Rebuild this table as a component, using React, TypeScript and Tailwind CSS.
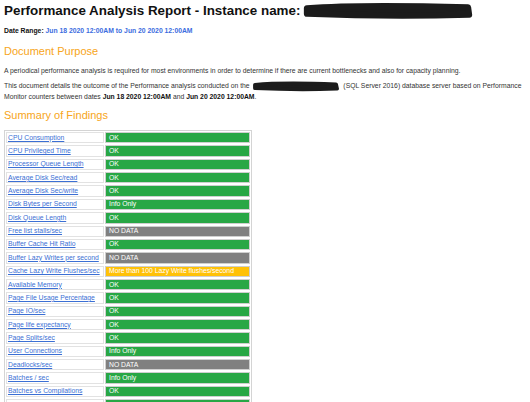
import React from "react";

type Status = "ok" | "info" | "nodata" | "warn";

const findings: { name: string; status: Status; text: string }[] = [
  { name: "CPU Consumption", status: "ok", text: "OK" },
  { name: "CPU Privileged Time", status: "ok", text: "OK" },
  { name: "Processor Queue Length", status: "ok", text: "OK" },
  { name: "Average Disk Sec/read", status: "ok", text: "OK" },
  { name: "Average Disk Sec/write", status: "ok", text: "OK" },
  { name: "Disk Bytes per Second", status: "info", text: "Info Only" },
  { name: "Disk Queue Length", status: "ok", text: "OK" },
  { name: "Free list stalls/sec", status: "nodata", text: "NO DATA" },
  { name: "Buffer Cache Hit Ratio", status: "ok", text: "OK" },
  { name: "Buffer Lazy Writes per second", status: "nodata", text: "NO DATA" },
  { name: "Cache Lazy Write Flushes/sec", status: "warn", text: "More than 100 Lazy Write flushes/second" },
  { name: "Available Memory", status: "ok", text: "OK" },
  { name: "Page File Usage Percentage", status: "ok", text: "OK" },
  { name: "Page IO/sec", status: "ok", text: "OK" },
  { name: "Page life expectancy", status: "ok", text: "OK" },
  { name: "Page Splits/sec", status: "ok", text: "OK" },
  { name: "User Connections", status: "info", text: "Info Only" },
  { name: "Deadlocks/sec", status: "nodata", text: "NO DATA" },
  { name: "Batches / sec", status: "info", text: "Info Only" },
  { name: "Batches vs Compilations", status: "ok", text: "OK" },
  { name: "Compilations vs Recompilations", status: "ok", text: "OK" },
];

const statusClass: Record<Status, string> = {
  ok: "bg-[#28a745]",
  info: "bg-[#28a745]",
  nodata: "bg-[#808080]",
  warn: "bg-[#ffc107]",
};

function Scribble({ w, h }: { w: number; h: number }) {
  // marker-style redaction
  return (
    <svg width={w} height={h} viewBox={`0 0 ${w} ${h}`} className="inline-block align-middle">
      <path
        d={`M4 ${h * 0.35} C ${w * 0.3} ${h * 0.15}, ${w * 0.6} ${h * 0.2}, ${w - 5} ${h * 0.3} L ${w - 4} ${h * 0.7} C ${w * 0.6} ${h * 0.8}, ${w * 0.3} ${h * 0.75}, 4 ${h * 0.65} Z`}
        fill="#1c1c1c"
        stroke="#1c1c1c"
        strokeWidth={h * 0.35}
        strokeLinejoin="round"
      />
    </svg>
  );
}

export default function App() {
  return (
    <div className="min-h-[402px] bg-white pl-[4px] font-['Liberation_Sans',Arial,sans-serif] text-[6.8px] text-[#333]">
      {/* Title */}
      <div className="mt-[2px] flex h-[18px] items-center text-[13.4px] font-bold leading-[18px] text-[#111]">
        <span>Performance Analysis Report - Instance name:</span>
        <span className="ml-[3px]">
          <Scribble w={170} h={18} />
        </span>
      </div>

      <div className="mt-[6px] h-[10px] leading-[10px] font-bold">
        <span className="text-[#111]">Date Range: </span>
        <span className="text-[#3b6ce0]">Jun 18 2020 12:00AM to Jun 20 2020 12:00AM</span>
      </div>

      <h2 className="mt-[8px] text-[11px] leading-[14px] text-[#f7a520]">Document Purpose</h2>

      <p className="mt-[8px] leading-[10px]">
        A periodical performance analysis is required for most environments in order to determine if there are current
        bottlenecks and also for capacity planning.
      </p>

      <p className="mt-[5px] w-[526px] leading-[10px]">
        This document details the outcome of the Performance analysis conducted on the{" "}
        <Scribble w={90} h={11} /> (SQL Server 2016) database server based on Performance Monitor counters between dates{" "}
        <b className="text-[#111]">Jun 18 2020 12:00AM</b> and <b className="text-[#111]">Jun 20 2020 12:00AM</b>.
      </p>

      <h2 className="mt-[6px] text-[11px] leading-[14px] text-[#f7a520]">Summary of Findings</h2>

      {/* Findings table */}
      <div className="mt-[8px] flex w-[248px] flex-col gap-[2px] border border-[#d4d4d4] p-[1px]">
        {findings.map((f) => (
          <div key={f.name} className="flex h-[11.37px] gap-[1px]">
            <div className="flex w-[98px] shrink-0 items-center border border-[#e2e2e2] px-[1px]">
              <a href="#" className="whitespace-nowrap text-[#3b6fd4] underline">
                {f.name}
              </a>
            </div>
            <div
              className={`flex flex-1 items-center border border-[#cfcfcf] px-[3px] whitespace-nowrap text-white ${statusClass[f.status]}`}
            >
              {f.text}
            </div>
          </div>
        ))}
      </div>
    </div>
  );
}
